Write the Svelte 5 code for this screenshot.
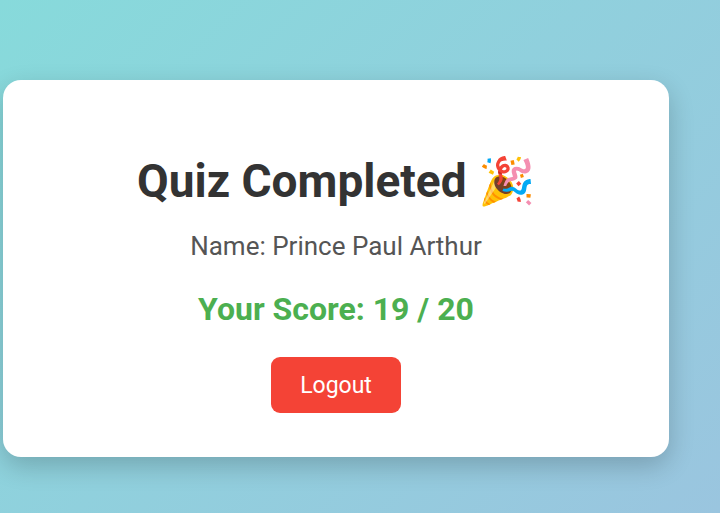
<script>
  let name = $state('Prince Paul Arthur');
  let score = $state(19);
  let total = $state(20);
</script>

<main>
  <section class="card">
    <h1>Quiz Completed 🎉</h1>
    <p class="name">Name: {name}</p>
    <p class="score">Your Score: {score} / {total}</p>
    <button type="button">Logout</button>
  </section>
</main>

<style>
  :global(body) {
    margin: 0;
  }

  main {
    box-sizing: border-box;
    min-height: 100vh;
    padding: 80px 51px 56px 3px;
    background: linear-gradient(135deg, #87dadb, #9ac5df);
    font-family: Roboto, sans-serif;
    text-align: center;
  }

  .card {
    display: flex;
    flex-direction: column;
    align-items: center;
    padding: 72px 40px 44px;
    border-radius: 18px;
    background: #fff;
    box-shadow: 0 9px 26px rgba(0, 0, 0, 0.2);
  }

  h1 {
    margin: 0 0 21px;
    color: #333;
    font-size: 46px;
    line-height: 58px;
    font-weight: 700;
  }

  p {
    margin: 0;
  }

  .name {
    margin-bottom: 29px;
    color: #555;
    font-size: 26px;
    line-height: 30px;
  }

  .score {
    margin-bottom: 29px;
    color: #4caf50;
    font-size: 32px;
    line-height: 38px;
    font-weight: 700;
  }

  button {
    padding: 15px 29px 13px;
    border: 0;
    border-radius: 9px;
    background: #f44336;
    color: #fff;
    font: 23px/28px Roboto, sans-serif;
    cursor: pointer;
  }
</style>
